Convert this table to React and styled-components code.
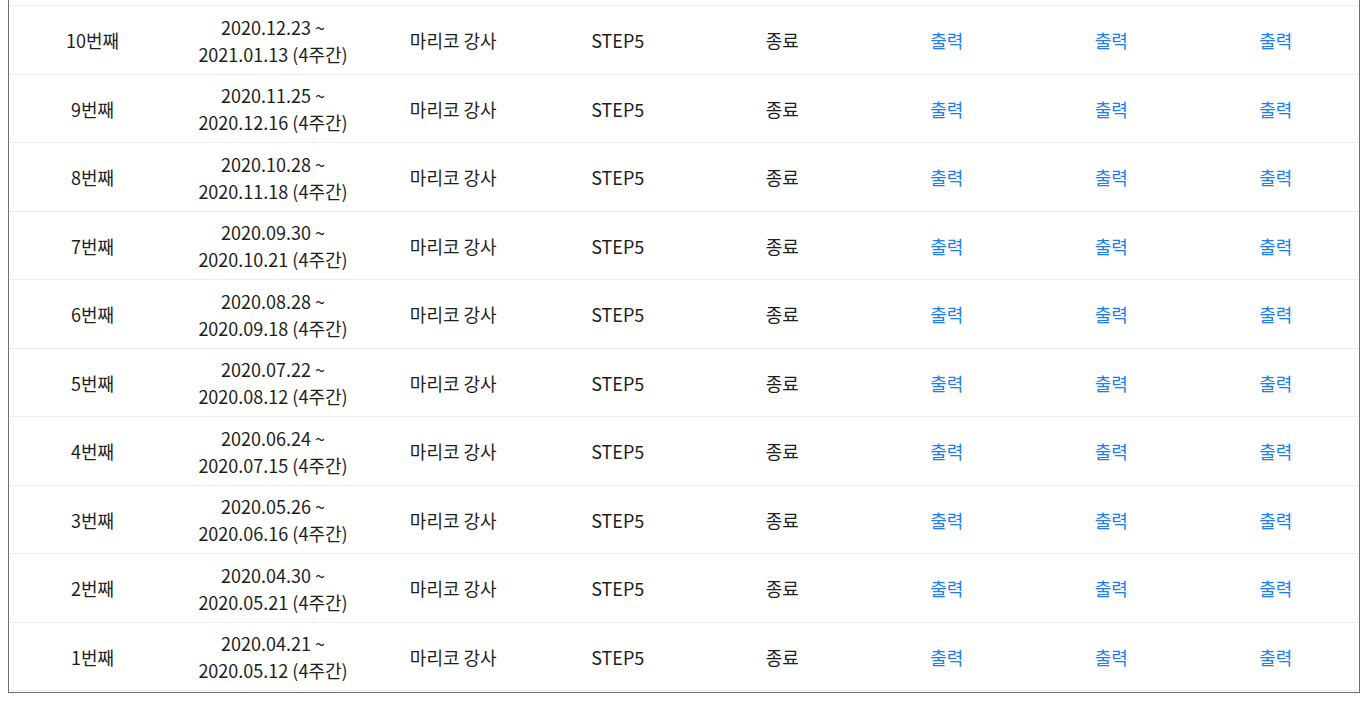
import React from "react";
import styled, { createGlobalStyle } from "styled-components";

const Global = createGlobalStyle`
  html, body { margin: 0; padding: 0; background: #fff; }
  body {
    padding: 0 8px;
    font-family: "Noto Sans CJK KR", "Noto Sans", sans-serif;
    color: #222;
  }
`;

const Board = styled.div`
  width: 1352px;
  box-sizing: border-box;
  border: 1px solid #6e6e6e;
  border-top: none;
  padding: 5px 1px 1px;
`;

const Row = styled.div`
  display: grid;
  grid-template-columns: 165px 196px repeat(6, 1fr);
  align-items: center;
  height: 67.5px;
  border-top: 1px solid #ececec;
  &:last-child { border-bottom: 1px solid #ececec; }
`;

const Cell = styled.div`
  text-align: center;
  font-size: 18px;
  line-height: 27px;
  padding-top: 2px;
  color: ${(p) => (p.$link ? "#1a7ef5" : "#1e1e1e")};
  cursor: ${(p) => (p.$link ? "pointer" : "default")};
`;

const rows = [
  ["10번째", "2020.12.23", "2021.01.13"],
  ["9번째", "2020.11.25", "2020.12.16"],
  ["8번째", "2020.10.28", "2020.11.18"],
  ["7번째", "2020.09.30", "2020.10.21"],
  ["6번째", "2020.08.28", "2020.09.18"],
  ["5번째", "2020.07.22", "2020.08.12"],
  ["4번째", "2020.06.24", "2020.07.15"],
  ["3번째", "2020.05.26", "2020.06.16"],
  ["2번째", "2020.04.30", "2020.05.21"],
  ["1번째", "2020.04.21", "2020.05.12"],
];

export default function App() {
  return (
    <>
      <Global />
      <Board>
        {rows.map(([n, s, e]) => (
          <Row key={n}>
            <Cell>{n}</Cell>
            <Cell>
              {s} ~<br />
              {e} (4주간)
            </Cell>
            <Cell>마리코 강사</Cell>
            <Cell>STEP5</Cell>
            <Cell>종료</Cell>
            <Cell $link>출력</Cell>
            <Cell $link>출력</Cell>
            <Cell $link>출력</Cell>
          </Row>
        ))}
      </Board>
    </>
  );
}
